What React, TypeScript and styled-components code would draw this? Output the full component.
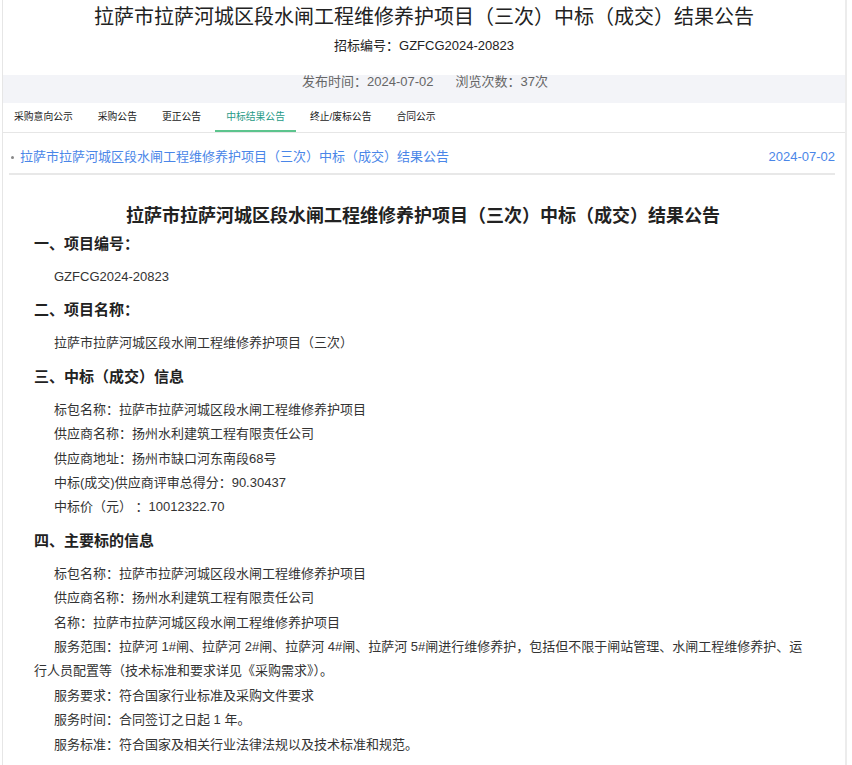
import React from "react";
import styled, { createGlobalStyle } from "styled-components";

const Global = createGlobalStyle`
  html, body { margin: 0; padding: 0; background: #fff; }
  body { font-family: "Liberation Sans", "Noto Sans CJK SC", sans-serif; color: #333; }
`;

const Page = styled.div`
  margin-left: 2px;
  width: 845px;
  border-left: 1px solid #e6e6e6;
  border-right: 2px solid #ececec;
  min-height: 765px;
  box-sizing: border-box;
`;

const Header = styled.header`
  padding-top: 5px;
  text-align: center;
`;

const MainTitle = styled.h1`
  margin: 0;
  font-size: 20px;
  line-height: 24px;
  font-weight: normal;
  color: #222;
`;

const Code = styled.div`
  margin-top: 9px;
  font-size: 13px;
  line-height: 16px;
  color: #222;
`;

const MetaBand = styled.div`
  margin-top: 21px;
  background: #f3f4f8;
  height: 28px;
  font-size: 13px;
  line-height: 13px;
  color: #666;
  display: flex;
  justify-content: center;
  gap: 22px;
  padding-left: 2px;
  box-sizing: border-box;
`;

const Tabs = styled.nav`
  display: flex;
  height: 29px;
  border-bottom: 1px solid #e6e6e6;
`;

const Tab = styled.div<{ $active?: boolean }>`
  padding: 0 11px;
  margin-right: 3px;
  font-size: 9.8px;
  line-height: 27px;
  color: ${(p) => (p.$active ? "#1f9a86" : "#222")};
  border-bottom: 2px solid ${(p) => (p.$active ? "#5cc48d" : "transparent")};
  white-space: nowrap;
`;

const ListRow = styled.div`
  margin: 0 10px 0 6px;
  padding: 17px 0 9px;
  border-bottom: 2px solid #e8e8e8;
  display: flex;
  align-items: center;
  font-size: 13px;
  line-height: 14px;
  color: #4a86e8;
`;

const Bullet = styled.span`
  width: 3px;
  height: 3px;
  background: #888;
  border-radius: 50%;
  margin: 0 6px 0 2px;
`;

const LinkText = styled.span`
  flex: 1;
`;

const Article = styled.article`
  padding: 29px 33px 0 31px;
`;

const ArticleTitle = styled.h2`
  margin: 0 0 4px;
  text-align: center;
  font-size: 18px;
  line-height: 24px;
  font-weight: bold;
  color: #222;
`;

const Section = styled.section`
  margin-bottom: 9px;
`;

const SectionHead = styled.h3`
  margin: 0 0 9px;
  font-size: 15px;
  line-height: 24px;
  font-weight: bold;
  color: #222;
`;

const Para = styled.p`
  margin: 0;
  font-size: 13px;
  line-height: 24.4px;
  text-indent: 20px;
  color: #333;
`;

const tabs = ["采购意向公示", "采购公告", "更正公告", "中标结果公告", "终止/废标公告", "合同公示"];

export default function App() {
  return (
    <Page>
      <Global />
      <Header>
        <MainTitle>拉萨市拉萨河城区段水闸工程维修养护项目（三次）中标（成交）结果公告</MainTitle>
        <Code>招标编号：GZFCG2024-20823</Code>
        <MetaBand>
          <span>发布时间：2024-07-02</span>
          <span>浏览次数：37次</span>
        </MetaBand>
      </Header>
      <Tabs>
        {tabs.map((t) => (
          <Tab key={t} $active={t === "中标结果公告"}>{t}</Tab>
        ))}
      </Tabs>
      <ListRow>
        <Bullet />
        <LinkText>拉萨市拉萨河城区段水闸工程维修养护项目（三次）中标（成交）结果公告</LinkText>
        <span>2024-07-02</span>
      </ListRow>
      <Article>
        <ArticleTitle>拉萨市拉萨河城区段水闸工程维修养护项目（三次）中标（成交）结果公告</ArticleTitle>
        <Section>
          <SectionHead>一、项目编号：</SectionHead>
          <Para>GZFCG2024-20823</Para>
        </Section>
        <Section>
          <SectionHead>二、项目名称：</SectionHead>
          <Para>拉萨市拉萨河城区段水闸工程维修养护项目（三次）</Para>
        </Section>
        <Section>
          <SectionHead>三、中标（成交）信息</SectionHead>
          <Para>标包名称：拉萨市拉萨河城区段水闸工程维修养护项目</Para>
          <Para>供应商名称：扬州水利建筑工程有限责任公司</Para>
          <Para>供应商地址：扬州市缺口河东南段68号</Para>
          <Para>中标(成交)供应商评审总得分：90.30437</Para>
          <Para>中标价（元） ：10012322.70</Para>
        </Section>
        <Section>
          <SectionHead>四、主要标的信息</SectionHead>
          <Para>标包名称：拉萨市拉萨河城区段水闸工程维修养护项目</Para>
          <Para>供应商名称：扬州水利建筑工程有限责任公司</Para>
          <Para>名称：拉萨市拉萨河城区段水闸工程维修养护项目</Para>
          <Para>服务范围：拉萨河 1#闸、拉萨河 2#闸、拉萨河 4#闸、拉萨河 5#闸进行维修养护，包括但不限于闸站管理、水闸工程维修养护、运行人员配置等（技术标准和要求详见《采购需求》）。</Para>
          <Para>服务要求：符合国家行业标准及采购文件要求</Para>
          <Para>服务时间：合同签订之日起 1 年。</Para>
          <Para>服务标准：符合国家及相关行业法律法规以及技术标准和规范。</Para>
        </Section>
      </Article>
    </Page>
  );
}
